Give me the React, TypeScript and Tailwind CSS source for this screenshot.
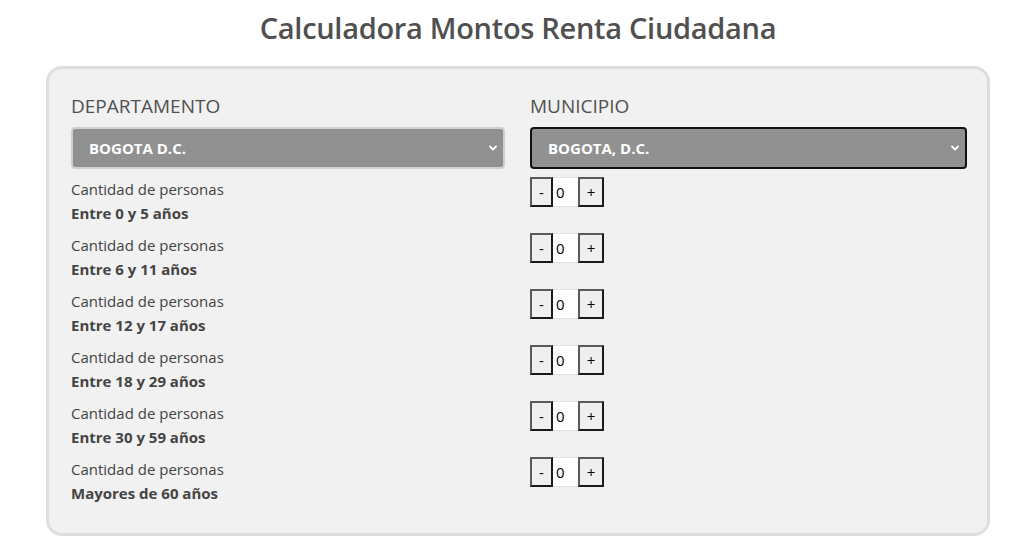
import { useState } from "react";

const grupos = [
  "Entre 0 y 5 años",
  "Entre 6 y 11 años",
  "Entre 12 y 17 años",
  "Entre 18 y 29 años",
  "Entre 30 y 59 años",
  "Mayores de 60 años",
];

function Counter() {
  const [n, setN] = useState(0);
  return (
    <div className="flex h-[30px]">
      <button
        onClick={() => setN((v) => Math.max(0, v - 1))}
        className="w-[23px] h-[30px] bg-[#efefef] border-2 border-[#1a1a1a] border-t-[#5a5a5a] border-l-[#5a5a5a] text-[15px] leading-none text-black"
      >
        -
      </button>
      <input
        value={n}
        readOnly
        className="w-[25px] h-[30px] bg-white text-[15px] text-black pl-[3px] outline-none border-y border-[#e2e2e2]"
      />
      <button
        onClick={() => setN((v) => v + 1)}
        className="w-[26px] h-[30px] bg-[#efefef] border-2 border-[#1a1a1a] border-t-[#5a5a5a] border-l-[#5a5a5a] text-[15px] leading-none text-black"
      >
        +
      </button>
    </div>
  );
}

function Select({ value, dark }: { value: string; dark?: boolean }) {
  return (
    <div
      className={`flex items-center justify-between h-[42px] bg-[#919191] rounded-[4px] pl-[16px] pr-[5px] border-2 ${
        dark ? "border-[#111]" : "border-[#cfcfcf]"
      }`}
    >
      <span className="text-white font-bold text-[15px]">{value}</span>
      <svg width="10" height="10" viewBox="0 0 10 10" fill="none">
        <path d="M2 3.5 5 6.5 8 3.5" stroke="white" strokeWidth="1.8" strokeLinecap="round" strokeLinejoin="round" />
      </svg>
    </div>
  );
}

export default function App() {
  return (
    <div className="w-[1022px] h-[550px] bg-white text-[#444] overflow-hidden" style={{ fontFamily: '"Open Sans", "Noto Sans", sans-serif' }}>
      <h1 className="text-center text-[29px] font-semibold text-[#505050] pt-[8px] pl-[14px] leading-[40px] tracking-[-0.3px]">
        Calculadora Montos Renta Ciudadana
      </h1>
      <div className="ml-[46px] w-[944px] mt-[18px] h-[470px] border-[3px] border-[#dedede] rounded-[16px] bg-[#f1f1f1] pl-[22px] pr-[20px] pt-[23px]">
        <div className="grid grid-cols-[434px_1fr] gap-x-[25px]">
          <div>
            <div className="text-[19px] font-medium text-[#505050] leading-[28px]">DEPARTAMENTO</div>
            <div className="mt-[7px]">
              <Select value="BOGOTA D.C." />
            </div>
          </div>
          <div>
            <div className="text-[19px] font-medium text-[#505050] leading-[28px]">MUNICIPIO</div>
            <div className="mt-[7px]">
              <Select value="BOGOTA, D.C." dark />
            </div>
          </div>
        </div>
        <div className="mt-[8px] flex flex-col">
          {grupos.map((g) => (
            <div key={g} className="grid grid-cols-[434px_1fr] gap-x-[25px] h-[56px]">
              <div className="text-[15px] leading-[24px] text-[#444]">
                <div>Cantidad de personas</div>
                <div className="font-bold">{g}</div>
              </div>
              <div>
                <Counter />
              </div>
            </div>
          ))}
        </div>
      </div>
    </div>
  );
}
